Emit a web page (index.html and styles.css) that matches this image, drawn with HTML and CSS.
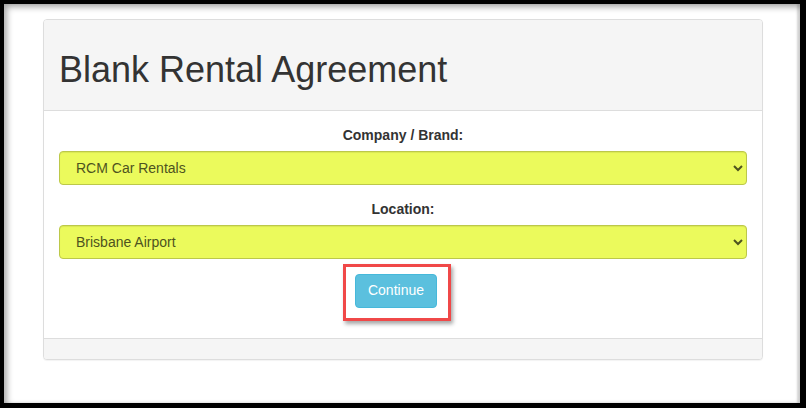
FILE: index.html
```html
<!DOCTYPE html>
<html>
<head>
<meta charset="utf-8">
<link rel="stylesheet" href="styles.css">
</head>
<body>
<div class="frame">
  <div class="panel">
    <div class="panel-heading">
      <h1 class="title">Blank Rental Agreement</h1>
    </div>
    <div class="panel-body">
      <div class="form-group">
        <label class="label">Company / Brand:</label>
        <select class="form-control"><option>RCM Car Rentals</option></select>
      </div>
      <div class="form-group">
        <label class="label">Location:</label>
        <select class="form-control"><option>Brisbane Airport</option></select>
      </div>
      <div class="form-group actions">
        <span class="btn-wrap">
          <button class="btn" type="button">Continue</button>
          <span class="highlight"></span>
        </span>
      </div>
    </div>
    <div class="panel-footer"></div>
  </div>
</div>
</body>
</html>
```

FILE: styles.css
```css
html, body {
  margin: 0;
  padding: 0;
  background: #000;
}
body {
  width: 806px;
  height: 408px;
  overflow: hidden;
  font-family: "Liberation Sans", Arial, Helvetica, sans-serif;
  font-size: 14px;
  line-height: 1.42857;
  color: #333;
}
.frame {
  box-sizing: border-box;
  margin: 4px 0 0 4px;
  width: 796px;
  height: 399px;
  background: #fff;
  padding: 15px 0 0 39px;
  box-shadow: inset 3px 3px 6px rgba(0,0,0,0.35), inset -3px 0 2px rgba(0,0,0,0.15);
}
.panel {
  width: 720px;
  box-sizing: border-box;
  border: 1px solid #ddd;
  border-radius: 4px;
  background: #fff;
  box-shadow: 0 1px 1px rgba(0,0,0,0.05);
}
.panel-heading {
  padding: 10px 15px;
  background: #f5f5f5;
  border-bottom: 1px solid #ddd;
  border-radius: 3px 3px 0 0;
}
.title {
  margin: 20px 0 10px;
  font-size: 36px;
  font-weight: normal;
  line-height: 1.1;
  color: #333;
}
.panel-body {
  padding: 15px;
}
.form-group {
  margin-bottom: 15px;
  text-align: center;
}
.label {
  display: block;
  font-weight: bold;
  margin-bottom: 5px;
}
.form-control {
  display: block;
  width: 100%;
  height: 34px;
  box-sizing: border-box;
  padding: 6px 12px;
  font-family: "Liberation Sans", Arial, Helvetica, sans-serif;
  font-size: 14px;
  color: #4e531f;
  background-color: #ebfa5c;
  border: 1px solid #bcc84a;
  border-radius: 4px;
  box-shadow: inset 0 1px 1px rgba(0,0,0,0.075);
}
.actions {
  padding-right: 14px;
}
.btn-wrap {
  position: relative;
  display: inline-block;
  vertical-align: top;
}
.btn {
  display: block;
  padding: 6px 12px;
  font-family: "Liberation Sans", Arial, Helvetica, sans-serif;
  font-size: 14px;
  line-height: 1.42857;
  color: #fff;
  background: #5bc0de;
  border: 1px solid #46b8da;
  border-radius: 4px;
}
.highlight {
  position: absolute;
  left: -12px;
  right: -14px;
  top: -10px;
  bottom: -13px;
  border: 3px solid #f04848;
  box-shadow: 2px 3px 4px rgba(0,0,0,0.35);
  pointer-events: none;
}
.panel-footer {
  height: 20px;
  background: #f5f5f5;
  border-top: 1px solid #ddd;
  border-radius: 0 0 3px 3px;
}
```
